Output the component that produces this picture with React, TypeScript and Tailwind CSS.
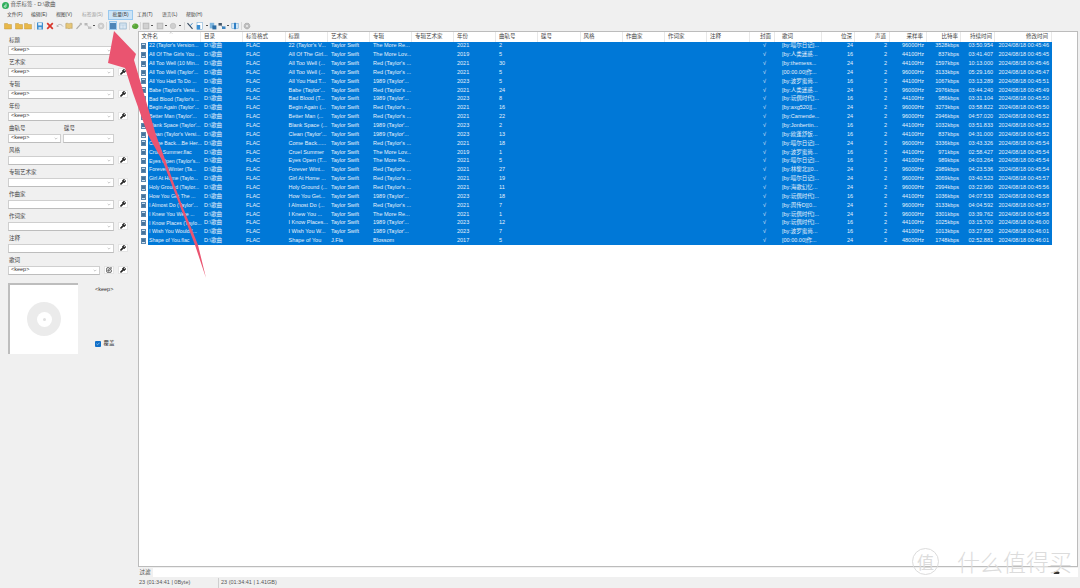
import { Check, SquarePen, Wrench } from "lucide-react"

const font = "font-['Liberation_Sans','Noto_Sans_CJK_SC',sans-serif]"

type Row = {
  file: string
  title: string
  artist?: string
  album: string
  year: string
  track: string
  lyrics: string
  bits: string
  rate: string
  bitrate: string
  dur: string
  mod: string
}

const more = "The More Re..."
const lover = "The More Lov..."
const red = "Red (Taylor's ..."
const n89 = "1989 (Taylor'..."

const rows: Row[] = [
  { file: "22 (Taylor's Version...", title: "22 (Taylor's V...", album: more, year: "2021", track: "2", lyrics: "[by:喵尔日记]...", bits: "24", rate: "96000Hz", bitrate: "3528kbps", dur: "03:50.954", mod: "00:45:46" },
  { file: "All Of The Girls You ...", title: "All Of The Girl...", album: lover, year: "2019", track: "5", lyrics: "[by:人类迷惑...", bits: "16", rate: "44100Hz", bitrate: "837kbps", dur: "03:41.407", mod: "00:45:45" },
  { file: "All Too Well (10 Min...", title: "All Too Well (...", album: red, year: "2021", track: "30", lyrics: "[by:themess...", bits: "24", rate: "44100Hz", bitrate: "1597kbps", dur: "10:13.000", mod: "00:45:46" },
  { file: "All Too Well (Taylor'...", title: "All Too Well (...", album: red, year: "2021", track: "5", lyrics: "[00:00.00]作...", bits: "24", rate: "96000Hz", bitrate: "3133kbps", dur: "05:29.160", mod: "00:45:47" },
  { file: "All You Had To Do ...", title: "All You Had T...", album: n89, year: "2023", track: "5", lyrics: "[by:波罗蜜尚...", bits: "16", rate: "44100Hz", bitrate: "1067kbps", dur: "03:13.289", mod: "00:45:51" },
  { file: "Babe (Taylor's Versi...", title: "Babe (Taylor'...", album: red, year: "2021", track: "24", lyrics: "[by:人类迷惑...", bits: "24", rate: "96000Hz", bitrate: "2976kbps", dur: "03:44.240", mod: "00:45:49" },
  { file: "Bad Blood (Taylor's ...", title: "Bad Blood (T...", album: n89, year: "2023", track: "8", lyrics: "[by:玩偶时代]...", bits: "16", rate: "44100Hz", bitrate: "986kbps", dur: "03:31.104", mod: "00:45:50" },
  { file: "Begin Again (Taylor'...", title: "Begin Again (...", album: red, year: "2021", track: "16", lyrics: "[by:axg520][...", bits: "24", rate: "96000Hz", bitrate: "3273kbps", dur: "03:58.822", mod: "00:45:50" },
  { file: "Better Man (Taylor'...", title: "Better Man (...", album: red, year: "2021", track: "22", lyrics: "[by:Camende...", bits: "24", rate: "96000Hz", bitrate: "2946kbps", dur: "04:57.020", mod: "00:45:52" },
  { file: "Blank Space (Taylor'...", title: "Blank Space (...", album: n89, year: "2023", track: "2", lyrics: "[by:Jonbertin...", bits: "16", rate: "44100Hz", bitrate: "1032kbps", dur: "03:51.833", mod: "00:45:52" },
  { file: "Clean (Taylor's Versi...", title: "Clean (Taylor'...", album: n89, year: "2023", track: "13", lyrics: "[by:欧蓬舒饭...", bits: "16", rate: "44100Hz", bitrate: "837kbps", dur: "04:31.000", mod: "00:45:52" },
  { file: "Come Back....Be Her...", title: "Come Back......", album: red, year: "2021", track: "18", lyrics: "[by:喵尔日记]...", bits: "24", rate: "96000Hz", bitrate: "3336kbps", dur: "03:43.326", mod: "00:45:54" },
  { file: "Cruel Summer.flac", title: "Cruel Summer", album: lover, year: "2019", track: "1", lyrics: "[by:波罗蜜尚...", bits: "16", rate: "44100Hz", bitrate: "971kbps", dur: "02:58.427", mod: "00:45:54" },
  { file: "Eyes Open (Taylor's...", title: "Eyes Open (T...", album: more, year: "2021", track: "5", lyrics: "[by:喵尔日记]...", bits: "16", rate: "44100Hz", bitrate: "989kbps", dur: "04:03.264", mod: "00:45:54" },
  { file: "Forever Winter (Ta...", title: "Forever Wint...", album: red, year: "2021", track: "27", lyrics: "[by:林黎北][0...", bits: "24", rate: "96000Hz", bitrate: "2989kbps", dur: "04:23.536", mod: "00:45:54" },
  { file: "Girl At Home (Taylo...", title: "Girl At Home ...", album: red, year: "2021", track: "19", lyrics: "[by:喵尔日记]...", bits: "24", rate: "96000Hz", bitrate: "3069kbps", dur: "03:40.523", mod: "00:45:57" },
  { file: "Holy Ground (Taylor...", title: "Holy Ground (...", album: red, year: "2021", track: "11", lyrics: "[by:海歌幻忆...", bits: "24", rate: "96000Hz", bitrate: "2994kbps", dur: "03:22.960", mod: "00:45:56" },
  { file: "How You Get The ...", title: "How You Get...", album: n89, year: "2023", track: "18", lyrics: "[by:玩偶时代]...", bits: "16", rate: "44100Hz", bitrate: "1036kbps", dur: "04:07.533", mod: "00:45:58" },
  { file: "I Almost Do (Taylor'...", title: "I Almost Do (...", album: red, year: "2021", track: "7", lyrics: "[by:周传D][0...", bits: "24", rate: "96000Hz", bitrate: "3133kbps", dur: "04:04.592", mod: "00:45:57" },
  { file: "I Knew You Were ...", title: "I Knew You ...", album: more, year: "2021", track: "1", lyrics: "[by:玩偶时代]...", bits: "24", rate: "96000Hz", bitrate: "3301kbps", dur: "03:39.762", mod: "00:45:58" },
  { file: "I Know Places (Taylo...", title: "I Know Places...", album: n89, year: "2023", track: "12", lyrics: "[by:玩偶时代]...", bits: "16", rate: "44100Hz", bitrate: "1025kbps", dur: "03:15.700", mod: "00:46:00" },
  { file: "I Wish You Would (...", title: "I Wish You W...", album: n89, year: "2023", track: "7", lyrics: "[by:波罗蜜尚...", bits: "16", rate: "44100Hz", bitrate: "1013kbps", dur: "03:27.650", mod: "00:46:01" },
  { file: "Shape of You.flac", title: "Shape of You", artist: "J.Fla", album: "Blossom", year: "2017", track: "5", lyrics: "[00:00.00]作...", bits: "24", rate: "48000Hz", bitrate: "1748kbps", dur: "02:52.881", mod: "00:46:01" },
]

function Cell({ className, children }: { className: string; children?: React.ReactNode }) {
  return <div className={`shrink-0 whitespace-nowrap ${className}`}>{children}</div>
}

function Cells({ r }: { r: Row }) {
  return (
    <>
      <Cell className="w-[53px] pl-[1px] text-[5.2px]">{r.file}</Cell>
      <Cell className="w-[42px] pl-[3px]">D:\歌曲</Cell>
      <Cell className="w-[42.5px] pl-[3px]">FLAC</Cell>
      <Cell className="w-[42.5px] pl-[3px]">{r.title}</Cell>
      <Cell className="w-[42px] pl-[3px]">{r.artist ?? "Taylor Swift"}</Cell>
      <Cell className="w-[42px] pl-[3px]">{r.album}</Cell>
      <Cell className="w-[42px]" />
      <Cell className="w-[42px] pl-[3px]">{r.year}</Cell>
      <Cell className="w-[42px] pl-[3px]">{r.track}</Cell>
      <Cell className="w-[42.5px]" />
      <Cell className="w-[42.5px]" />
      <Cell className="w-[42px]" />
      <Cell className="w-[42px]" />
      <Cell className="w-[43px]" />
      <Cell className="w-[25px] pl-[13px]">√</Cell>
      <Cell className="w-[47px] pl-[7px]">{r.lyrics}</Cell>
      <Cell className="w-[33px] pr-[2px] text-right">{r.bits}</Cell>
      <Cell className="w-[35px] pr-[3px] text-right">2</Cell>
      <Cell className="w-[37px] pr-[3px] text-right">{r.rate}</Cell>
      <Cell className="w-[34px] pr-[2px] text-right">{r.bitrate}</Cell>
      <Cell className="w-[34px] pr-[2px] text-right">{r.dur}</Cell>
      <Cell className="w-[57px] pr-[3px] text-right">2024/08/18 {r.mod}</Cell>
    </>
  )
}

function Head({ className, children }: { className: string; children?: React.ReactNode }) {
  return <div className={`h-full shrink-0 border-r border-[#e8e8e8] flex items-center whitespace-nowrap ${className}`}>{children}</div>
}

function Combo({ className, text }: { className: string; text?: string }) {
  return (
    <div className={`h-[9px] bg-white border border-[#cfcfcf] border-b-[#bdbdbd] flex items-center justify-between pl-[2px] pr-[2px] text-[5.5px] text-[#333] ${className}`}>
      <span>{text}</span>
      <svg viewBox="0 0 6 4" className="w-[4px] h-[3px]">
        <path d="M1 1l2 2 2-2" fill="none" stroke="#999" strokeWidth="0.8" />
      </svg>
    </div>
  )
}

function ToolBtn({ children }: { children: React.ReactNode }) {
  return <div className="w-[10px] h-[8px] bg-white border border-[#e4e4e4] flex items-center justify-center shrink-0">{children}</div>
}

function Wr() {
  return <Wrench className="w-[6px] h-[6px] text-[#222] fill-[#222]" strokeWidth={3} />
}

function Field({ label, text, noBtn }: { label: string; text?: string; noBtn?: boolean }) {
  return (
    <div className="h-[22px] shrink-0">
      <div className="h-[10.5px] flex items-center pl-[1px] text-[5.5px] text-[#444]">{label}</div>
      <div className="flex items-center">
        <Combo className="w-[106px]" text={text} />
        {!noBtn && (
          <div className="ml-[4px]">
            <ToolBtn>
              <Wr />
            </ToolBtn>
          </div>
        )}
      </div>
    </div>
  )
}

function Sep({ className }: { className: string }) {
  return <div className={`w-[1px] h-[8px] bg-[#d8d8d8] shrink-0 ${className}`} />
}

function Dot({ className }: { className: string }) {
  return <div className={`w-[2px] h-[1.5px] bg-[#555] shrink-0 ${className}`} />
}

function Ico({ className, children }: { className: string; children: React.ReactNode }) {
  return (
    <svg viewBox="0 0 8 8" className={`w-[8px] h-[8px] shrink-0 ${className}`}>
      {children}
    </svg>
  )
}

function Folder({ className }: { className: string }) {
  return (
    <Ico className={className}>
      <path d="M0.5 1.5h3l1 1h3v4.5h-7z" fill="#e8b84a" stroke="#b98a2a" strokeWidth="0.4" />
    </Ico>
  )
}

function GraySq({ className }: { className: string }) {
  return (
    <Ico className={className}>
      <rect x="1" y="1" width="6" height="6" fill="#c8c8c8" stroke="#b0b0b0" strokeWidth="0.5" />
      <path d="M2 3h4M2 5h4" stroke="#e8e8e8" strokeWidth="0.6" />
    </Ico>
  )
}

function Toolbar() {
  return (
    <div className="h-[11px] shrink-0 flex items-center pl-[4px]">
      <Folder className="" />
      <Folder className="ml-[2.6px]" />
      <Folder className="ml-[1.4px]" />
      <Sep className="ml-[2px]" />
      <Ico className="ml-[1px]">
        <rect x="1" y="0.5" width="6" height="7" fill="#3d8ed0" />
        <rect x="2.2" y="1" width="3.6" height="2.4" fill="#e4f0fa" />
        <rect x="2.5" y="5" width="3" height="2.5" fill="#bcd8ef" />
      </Ico>
      <Ico className="ml-[2px]">
        <path d="M1.2 1.2l5.6 5.6M6.8 1.2l-5.6 5.6" stroke="#d8352a" strokeWidth="1.7" />
      </Ico>
      <Ico className="ml-[2px]">
        <path d="M1 4.5c1-2.5 4-3 6 0" fill="none" stroke="#b5b5b5" strokeWidth="1" />
        <path d="M0.5 2.5l0.5 2.5 2.2-0.6z" fill="#b5b5b5" />
      </Ico>
      <Ico className="ml-[1px]">
        <path d="M0.8 1.5c1.2-0.5 2.4-0.3 3.2 0.4 0.8-0.7 2-0.9 3.2-0.4v5c-1.2-0.4-2.4-0.2-3.2 0.4-0.8-0.6-2-0.8-3.2-0.4z" fill="#e6c779" stroke="#9c8040" strokeWidth="0.4" />
      </Ico>
      <Ico className="ml-[2px]">
        <path d="M1.5 6.8l3.6-4" stroke="#aaa" strokeWidth="1.2" />
        <circle cx="5.8" cy="2" r="1.2" fill="#bbb" />
      </Ico>
      <Ico className="ml-[1px]">
        <rect x="0.5" y="1" width="3" height="2.5" fill="#b8b8b8" />
        <rect x="4" y="4.5" width="3.5" height="2.5" fill="#c4c4c4" />
        <path d="M3 3.5l1.5 1.2" stroke="#999" strokeWidth="0.5" />
      </Ico>
      <Dot className="ml-[1px]" />
      <Ico className="ml-[2px]">
        <circle cx="4" cy="4" r="3" fill="#d0d0d0" stroke="#bbb" strokeWidth="0.5" />
        <circle cx="4" cy="4" r="1" fill="#eee" />
      </Ico>
      <Sep className="ml-[1px]" />
      <div className="ml-[2px] w-[8px] h-[9px] bg-[#cce4f7] border border-[#99c9ef] flex items-center justify-center shrink-0">
        <div className="w-[6px] h-[6px] bg-[#4f86b8]" />
      </div>
      <Ico className="ml-[1.6px]">
        <rect x="0.8" y="1" width="6.4" height="6" fill="#dbe8f3" stroke="#7fa5c4" strokeWidth="0.6" />
        <path d="M1 3h6M4 3v4" stroke="#9dbbd3" strokeWidth="0.4" />
      </Ico>
      <Sep className="ml-[2px]" />
      <Ico className="ml-[1.5px]">
        <path d="M1 4.5c0-2 2-3.5 3.5-3 2 0 3.2 1.5 3 3-0.3 1.8-2 2.8-3.5 2.5-1.5 0-3-1-3-2.5z" fill="#5aa63a" />
        <circle cx="3" cy="3" r="0.8" fill="#8ccb5e" />
      </Ico>
      <Sep className="ml-[1px]" />
      <GraySq className="ml-[1px]" />
      <Dot className="ml-[0.5px]" />
      <GraySq className="ml-[3.5px]" />
      <Dot className="ml-[1px]" />
      <Ico className="ml-[2px]">
        <circle cx="4" cy="4" r="2.8" fill="#cfcfcf" stroke="#b4b4b4" strokeWidth="0.5" />
      </Ico>
      <Dot className="ml-[2px]" />
      <Sep className="ml-[3px]" />
      <Ico className="ml-[1px]">
        <path d="M1.5 1.2l5 5.6" stroke="#33475b" strokeWidth="1.1" />
        <path d="M6.5 1.2l-2.6 2.8" stroke="#4a8cc7" strokeWidth="1" />
      </Ico>
      <Ico className="ml-[2px]">
        <rect x="1" y="0.6" width="5.6" height="6.8" fill="#fff" stroke="#6aa2cf" strokeWidth="0.5" />
        <rect x="0.8" y="3" width="3.4" height="4.4" fill="#3c8fd2" />
      </Ico>
      <Dot className="ml-[1.5px]" />
      <Ico className="ml-[1.5px]">
        <rect x="0.8" y="0.8" width="4.4" height="5.6" fill="#7fb6df" />
        <rect x="3.4" y="3.4" width="4" height="4" fill="#2e6ea6" />
      </Ico>
      <Ico className="ml-[0.6px]">
        <rect x="0.5" y="1" width="3.4" height="2.6" fill="#44586c" />
        <rect x="4" y="4.4" width="3.5" height="2.6" fill="#3c85c2" />
        <path d="M3 3.6l1.5 1" stroke="#44586c" strokeWidth="0.5" />
      </Ico>
      <Dot className="ml-[1.4px]" />
      <Ico className="ml-[2px]">
        <rect x="0.8" y="1.5" width="6.4" height="5" fill="#d4e7f6" stroke="#5d9fd3" strokeWidth="0.5" />
        <rect x="3" y="0.8" width="2" height="6.4" fill="#2f7fc4" />
      </Ico>
      <Sep className="ml-[2px]" />
      <Ico className="ml-[1px]">
        <circle cx="4" cy="4" r="2.9" fill="#bdbdbd" stroke="#9c9c9c" strokeWidth="0.7" strokeDasharray="1 0.6" />
        <circle cx="4" cy="4" r="1.1" fill="#ececec" />
      </Ico>
    </div>
  )
}

export default function App() {
  return (
    <div className={`relative w-[1080px] h-[588px] overflow-hidden bg-[#f0f0f0] flex flex-col text-[5.5px] leading-none ${font}`}>
      {/* Title */}
      <div className="h-[10px] shrink-0 flex items-center pl-[2px] text-[#555]">
        <svg viewBox="0 0 8 8" className="w-[7px] h-[7px]">
          <circle cx="4" cy="4" r="4" fill="#2fae5c" />
          <path d="M4.6 1.8v3.2a1 1 0 1 1-0.7-0.9" fill="none" stroke="#fff" strokeWidth="0.8" />
        </svg>
        <span className="ml-[1.5px]">音乐标签 - D:\歌曲</span>
      </div>

      {/* Menu */}
      <div className="h-[10px] shrink-0 flex items-center text-[#444] text-[4.8px] whitespace-nowrap">
        <span className="ml-[7px] w-[16px]">文件(F)</span>
        <span className="ml-[8px] w-[16px]">编辑(E)</span>
        <span className="ml-[9px] w-[16px]">视图(V)</span>
        <span className="ml-[10px] w-[20px] text-[#a0a0a0]">标签源(S)</span>
        <span className="ml-[6px] h-[10px] w-[25px] bg-[#cce4f7] border border-[#99c9ef] flex items-center justify-center">批量(B)</span>
        <span className="ml-[4px] w-[16px]">工具(T)</span>
        <span className="ml-[9px] w-[16px]">语言(L)</span>
        <span className="ml-[8px] w-[18px]">帮助(H)</span>
      </div>

      <Toolbar />

      {/* Main */}
      <div className="flex-1 min-h-0 flex">
        {/* Left batch editor */}
        <div className="w-[137.5px] shrink-0 pl-[8px] pt-[4px] flex flex-col">
          <Field label="标题" text="<keep>" />
          <Field label="艺术家" text="<keep>" />
          <Field label="专辑" text="<keep>" />
          <Field label="年份" text="<keep>" />
          <div className="h-[22px] shrink-0 flex">
            <div className="w-[55px]">
              <div className="h-[10.5px] flex items-center pl-[1px] text-[#444]">曲轨号</div>
              <Combo className="w-[53px]" text="<keep>" />
            </div>
            <div>
              <div className="h-[10.5px] flex items-center pl-[1px] text-[#444]">碟号</div>
              <Combo className="w-[51px]" />
            </div>
          </div>
          <Field label="风格" />
          <Field label="专辑艺术家" />
          <Field label="作曲家" />
          <Field label="作词家" />
          <Field label="注释" />
          <div className="h-[10.5px] flex items-center pl-[1px] text-[#444] shrink-0">歌词</div>
          <div className="flex items-center shrink-0">
            <Combo className="w-[92px]" text="<keep>" />
            <div className="ml-[4px]">
              <ToolBtn>
                <SquarePen className="w-[6px] h-[6px] text-[#222]" strokeWidth={3} />
              </ToolBtn>
            </div>
            <div className="ml-[4px]">
              <ToolBtn>
                <Wr />
              </ToolBtn>
            </div>
          </div>
          <div className="flex mt-[8px]">
            <div className="w-[70px] h-[71px] bg-white border-[#bdbdbd] border-l-[2px] border-t-[2px] flex items-center justify-center shrink-0">
              <div className="w-[34px] h-[34px] rounded-full bg-[#ebebeb] flex items-center justify-center">
                <div className="w-[15px] h-[15px] rounded-full bg-white flex items-center justify-center">
                  <div className="w-[3px] h-[3px] rounded-full bg-[#e0e0e0]" />
                </div>
              </div>
            </div>
            <div className="flex-1 flex flex-col pl-[17px] pt-[4px] text-[#333]">
              <span>&lt;keep&gt;</span>
              <div className="mt-[49px] flex items-center gap-[3px]">
                <span className="w-[5.5px] h-[5.5px] rounded-[1px] bg-[#0f6fc9] flex items-center justify-center">
                  <Check className="w-[4px] h-[4px] text-white" strokeWidth={3} />
                </span>
                <span>覆盖</span>
              </div>
            </div>
          </div>
        </div>

        {/* File list */}
        <div className="flex-1 min-w-0 flex flex-col pr-[2px]">
          <div className="flex-1 min-h-0 bg-white border border-[#bcbcbc] text-[#4a4a4a] relative">
            <div className="h-[9.6px] flex text-[#444]">
              <Head className="w-[62.5px] pl-[3px]">文件名</Head>
              <Head className="w-[42px] pl-[3px]">目录</Head>
              <Head className="w-[42.5px] pl-[3px]">标签格式</Head>
              <Head className="w-[42.5px] pl-[3px]">标题</Head>
              <Head className="w-[42px] pl-[3px]">艺术家</Head>
              <Head className="w-[42px] pl-[3px]">专辑</Head>
              <Head className="w-[42px] pl-[3px]">专辑艺术家</Head>
              <Head className="w-[42px] pl-[3px]">年份</Head>
              <Head className="w-[42px] pl-[3px]">曲轨号</Head>
              <Head className="w-[42.5px] pl-[3px]">碟号</Head>
              <Head className="w-[42.5px] pl-[3px]">风格</Head>
              <Head className="w-[42px] pl-[3px]">作曲家</Head>
              <Head className="w-[42px] pl-[3px]">作词家</Head>
              <Head className="w-[43px] pl-[3px]">注释</Head>
              <Head className="w-[25px] pl-[10px]">封面</Head>
              <Head className="w-[47px] pl-[7px]">歌词</Head>
              <Head className="w-[33px] justify-end pr-[2px]">位深</Head>
              <Head className="w-[35px] justify-end pr-[3px]">声道</Head>
              <Head className="w-[37px] justify-end pr-[3px]">采样率</Head>
              <Head className="w-[34px] justify-end pr-[2px]">比特率</Head>
              <Head className="w-[34px] justify-end pr-[2px]">持续时间</Head>
              <Head className="w-[57px] justify-end pr-[3px]">修改时间</Head>
            </div>
            <svg viewBox="0 0 6 3" className="absolute left-[30px] top-0 w-[4px] h-[2px]">
              <path d="M1 2.5l2-2 2 2" fill="none" stroke="#999" strokeWidth="0.7" />
            </svg>
            {rows.map((r) => (
              <div key={r.file} className="flex items-center h-[8.87px]">
                <div className="w-[9.5px] h-full shrink-0 flex items-center justify-center bg-white">
                  <div className="w-[5px] h-[6px] bg-[#cfe0f0] border border-[#5c87ad] flex items-center justify-center">
                    <div className="w-[2.5px] h-[3px] bg-[#47739b]" />
                  </div>
                </div>
                <div className="flex h-full items-center bg-[#0078d7] text-[#e6f1fb]">
                  <Cells r={r} />
                </div>
              </div>
            ))}
          </div>
          <div className="h-[11px] shrink-0 flex items-center">
            <span className="pl-[2px] w-[15px] text-[#444] shrink-0">过滤</span>
            <div className="flex-1 h-[9px] bg-white flex items-center justify-end pr-[18px]">
              <svg viewBox="0 0 8 4" className="w-[7px] h-[3.5px]">
                <ellipse cx="4" cy="2" rx="3.5" ry="1.8" fill="#333" />
              </svg>
            </div>
          </div>
        </div>
      </div>

      {/* Status */}
      <div className="h-[10px] shrink-0 flex items-center text-[#555]">
        <div className="ml-[139px] w-[80px] h-full flex items-center border-r border-[#cfcfcf]">23 (01:34:41 | 0Byte)</div>
        <div className="pl-[2px]">23 (01:34:41 | 1.41GB)</div>
      </div>

      {/* Red annotation arrow */}
      <svg viewBox="0 0 1080 588" className="absolute inset-0 w-[1080px] h-[588px] pointer-events-none">
        <polygon points="114,31 136,54 134,60 156,135 180,200 198,245 206,278 195,245 163,162 148,135 133,93 125,68 108,63" fill="#ea5470" />
      </svg>

      {/* Watermark */}
      <div className="absolute left-[912px] top-[548px] flex items-center text-[#dcdcdc] pointer-events-none font-['Noto_Sans_CJK_SC',sans-serif]">
        <div className="w-[27px] h-[27px] rounded-full border border-[#dcdcdc] flex items-center justify-center text-[17px]">值</div>
        <div className="ml-[18px] text-[23px] font-light whitespace-nowrap">什么值得买</div>
      </div>
    </div>
  )
}
